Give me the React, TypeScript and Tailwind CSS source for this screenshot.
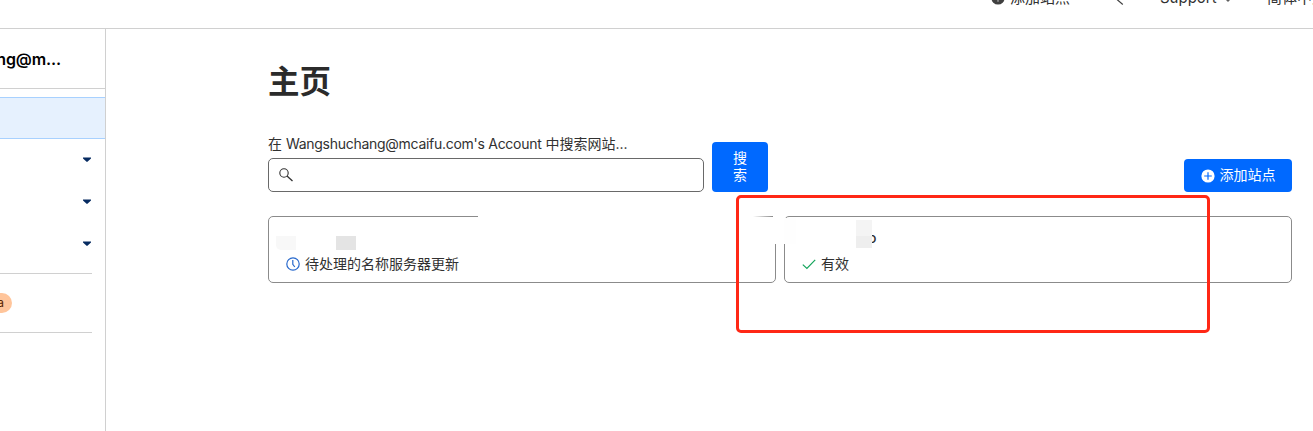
import React from "react";

const SANS = "font-['Inter','Noto_Sans_CJK_SC',sans-serif]";

function PlusCircle({ className, mark }: { className: string; mark: string }) {
  return (
    <svg className={className} viewBox="0 0 14 14" fill="none">
      <circle cx="7" cy="7" r="6.6" fill="currentColor" />
      <path d="M7 3.2v7.6M3.2 7h7.6" stroke={mark} strokeWidth="1.2" />
    </svg>
  );
}

function TopBar() {
  return (
    <header className="flex h-[29px] shrink-0 items-start overflow-hidden border-b border-[#d0d0d0] pl-[991px] text-[15px] leading-5 whitespace-nowrap text-[#313131]">
      <div className="-mt-[12px] flex shrink-0 items-center">
        <PlusCircle className="mr-[5px] h-[14px] w-[14px] text-[#404040]" mark="#b0b0b0" />
        <span className="w-[105px]">添加站点</span>
        <svg className="mr-[35px] h-3.5 w-2.5" viewBox="0 0 10 14" fill="none">
          <path d="M2 8.5l5.8 5" stroke="#404040" strokeWidth="1.2" />
        </svg>
        <span className="w-[64px]">Support</span>
        <svg className="mt-[3px] mr-[35px] h-1.5 w-2" viewBox="0 0 8 6">
          <path d="M0 1h8L4 5z" fill="#606060" />
        </svg>
        <span>简体中文</span>
      </div>
    </header>
  );
}

function Caret() {
  return (
    <div className="flex h-[42px] items-center justify-end pr-[14px]">
      <svg className="h-[6px] w-[8px]" viewBox="0 0 8 6">
        <path d="M0 .6h8v.8L4.7 4.6q-.7.6-1.4 0L0 1.4z" fill="#062b61" />
      </svg>
    </div>
  );
}

function Sidebar() {
  return (
    <aside className="w-[106px] shrink-0 overflow-hidden border-r border-[#d0d0d0]">
      <div className="flex h-[60px] items-center border-b border-[#d0d0d0]">
        <span className="flex w-[61px] justify-end pt-[1px] text-[16px] leading-6 font-semibold tracking-[-0.1px] whitespace-nowrap text-black">
          Wangshuchang@m...
        </span>
      </div>
      <div className="mt-2 h-[42px] border-y border-[#a8d1ff] bg-[#e6f1fe]" />
      <Caret />
      <Caret />
      <Caret />
      <div className="mt-[8px] mr-[13px] flex h-[60px] items-center border-y border-[#d0d0d0]">
        <div className="flex w-3 justify-end">
          <span className="h-5 shrink-0 rounded-full bg-[#ffc59b] px-2 text-[12px] leading-5 text-[#5a2600]">Beta</span>
        </div>
      </div>
    </aside>
  );
}

function SiteCards() {
  return (
    <section className="relative mt-6 grid grid-cols-2 gap-2">
      <article className="relative h-[67px] rounded-[5px] border border-[#8b8b8b] pt-[37px] pl-[17px]">
        <div className="flex items-center gap-[5px]">
          <svg className="h-[14px] w-[14px]" viewBox="0 0 14 14" fill="none" stroke="#2869cd" strokeWidth="1.2">
            <circle cx="7" cy="7" r="6.2" />
            <path d="M6.8 3v4.3l2 2.7" />
          </svg>
          <span className="text-[14px] leading-5 text-[#313131]">待处理的名称服务器更新</span>
        </div>
        <div className="absolute -top-px left-[209px] h-[3px] w-[277px] bg-white" />
        <div className="absolute -top-px -right-px h-[28px] w-2 bg-white" />
        <div className="absolute -top-px right-[2px] h-px w-[20px] bg-linear-to-r from-white to-[#8b8b8b]" />
        <div className="absolute top-[19px] left-[7px] h-[14px] w-5 rounded-bl-[5px] bg-[#f8f8f8]" />
        <div className="absolute top-[19px] left-[67px] h-[14px] w-5 bg-[#e4e4e4]" />
      </article>
      <article className="relative h-[67px] rounded-[5px] border border-[#8b8b8b] pt-[37px] pl-[17px]">
        <div className="flex items-center gap-[5px]">
          <svg className="h-[14px] w-[14px]" viewBox="0 0 14 14" fill="none">
            <path d="M.8 7.6l4.1 3.8L13.2 2.8" stroke="#13a45b" strokeWidth="1.2" />
          </svg>
          <span className="text-[14px] leading-5 text-[#313131]">有效</span>
        </div>
        <div className="absolute top-px -left-px h-[26px] w-3 bg-[#fefefe]" />
        <div className="absolute top-[11px] left-[83px] text-[14px] leading-5 font-medium text-[#313131]">o</div>
        <div className="absolute top-[3px] left-[71px] h-7 w-4 bg-[#f4f4f4]" />
        <div className="absolute top-[19px] left-[71px] h-3 w-4 bg-[#eeeeee]" />
      </article>
      <div className="pointer-events-none absolute -top-[21px] left-[468px] h-[138px] w-[474px] rounded-[5px] border-[3px] border-[#ff2816]" />
    </section>
  );
}

export default function App() {
  return (
    <div className={`${SANS} flex h-[431px] w-[1313px] flex-col overflow-hidden bg-white text-[#313131]`}>
      <TopBar />
      <div className="flex min-h-0 flex-1">
        <Sidebar />
        <main className="flex-1 pt-[33px] pr-[21px] pl-[162px]">
          <h1 className="text-[31.5px] leading-10 font-semibold text-[#2b2b2b]">主页</h1>
          <div className="mt-[32px] flex h-[58px] items-end">
            <div className="w-[436px]">
              <label className="mb-[4px] block text-[14px] leading-5 whitespace-nowrap">
                在 <span className="tracking-[-0.28px]">Wangshuchang@mcaifu.com's Account</span> 中搜索网站...
              </label>
              <div className="flex h-[34px] items-center rounded-[5px] border border-[#696969] pl-[10px]">
                <svg className="h-[14px] w-[14px]" viewBox="0 0 14 14" fill="none" stroke="#313131" strokeWidth="1.1">
                  <circle cx="5" cy="5" r="4.2" />
                  <path d="M8 8l5.5 5" strokeWidth="1.3" />
                </svg>
              </div>
            </div>
            <button className="ml-2 h-[50px] w-14 rounded-[4px] bg-[#0069ff] px-[20px] pb-[2px] text-[14px] leading-[17px] text-white">
              搜索
            </button>
            <button className="ml-auto flex h-[33px] w-[108px] items-center justify-center gap-[5px] rounded-[4px] bg-[#0069ff] text-[14px] leading-5 text-white">
              <PlusCircle className="h-[14px] w-[14px] text-white" mark="#0069ff" />
              <span className="-mt-[2px]">添加站点</span>
            </button>
          </div>
          <SiteCards />
        </main>
      </div>
    </div>
  );
}
